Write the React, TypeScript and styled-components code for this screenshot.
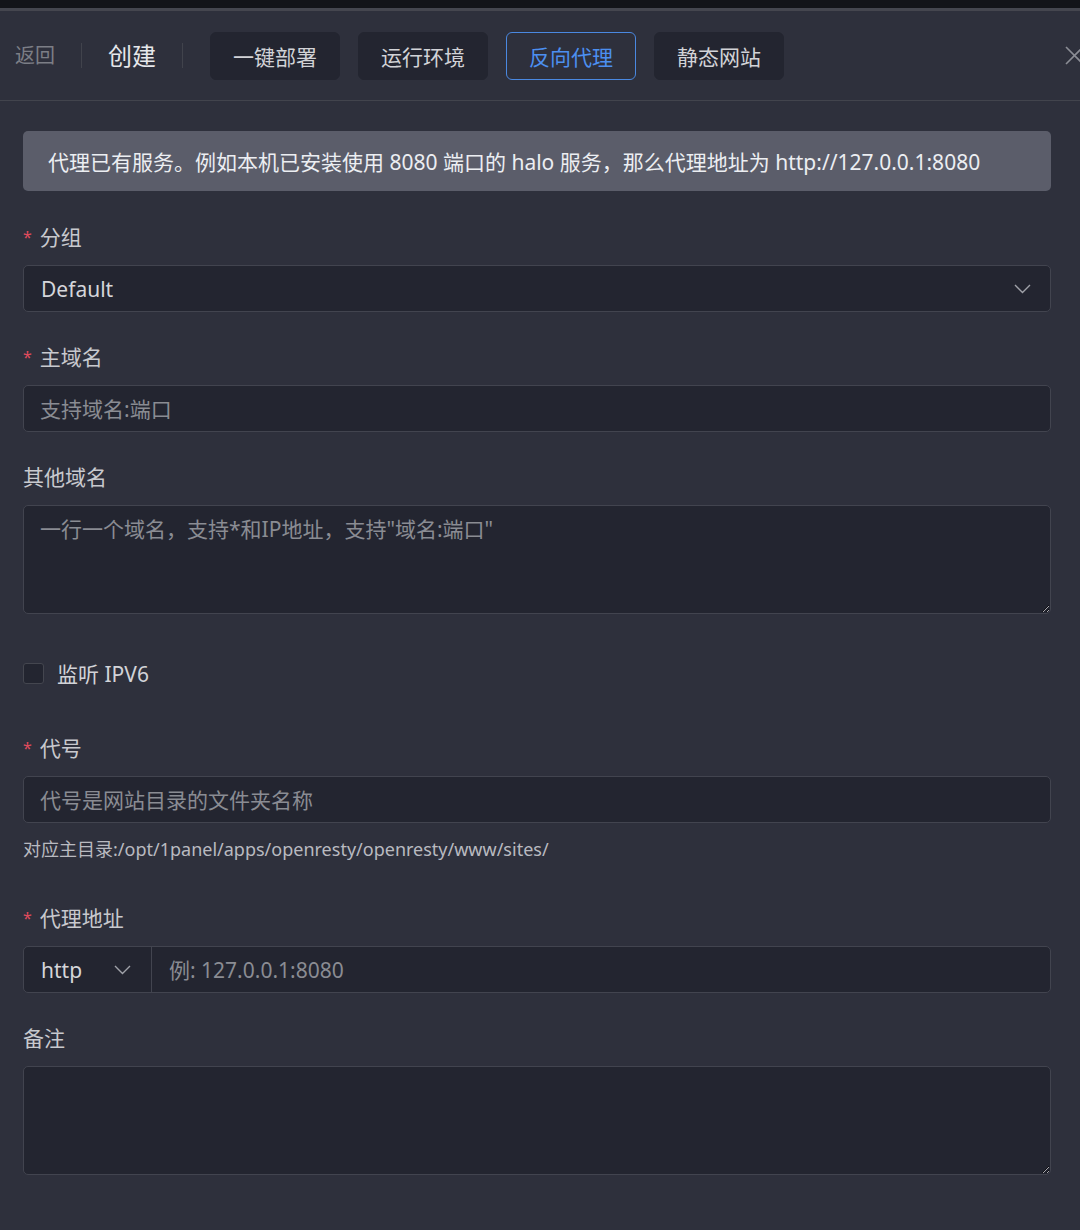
import React from "react";
import styled, { createGlobalStyle } from "styled-components";

const GlobalStyle = createGlobalStyle`
  html, body {
    margin: 0;
    padding: 0;
    background: #2e303c;
  }
  body {
    font-family: "Noto Sans", "Noto Sans CJK SC", sans-serif;
    color: #cfd0d5;
    overflow: hidden;
  }
  * { box-sizing: border-box; }
`;

const Page = styled.div`
  width: 1080px;
  min-height: 1230px;
  background: #2e303c;
  overflow: hidden;
`;

const TopStrip = styled.div`
  height: 11px;
  background: #131419;
  border-bottom: 3px solid #45464f;
`;

const Header = styled.header`
  height: 90px;
  display: flex;
  align-items: center;
  padding-left: 15px;
  border-bottom: 1px solid #42444d;
`;

const BackLink = styled.span`
  font-size: 20px;
  color: #7c7e86;
  line-height: 1;
`;

const VDivider = styled.span`
  width: 1px;
  height: 25px;
  background: #41434c;
  margin: 0 26px;
`;

const Title = styled.span`
  font-size: 24px;
  color: #e6e7eb;
  line-height: 1;
`;

const TabGroup = styled.div`
  display: flex;
  gap: 18px;
  margin-left: 1px;
`;

const TabButton = styled.button<{ $active?: boolean }>`
  height: 48px;
  padding: 0 22px;
  border-radius: 6px;
  font-family: inherit;
  font-size: 21px;
  cursor: pointer;
  background: ${(p) => (p.$active ? "#2e303c" : "#232530")};
  color: ${(p) => (p.$active ? "#4c8ff0" : "#d2d3d7")};
  border: 1px solid ${(p) => (p.$active ? "#4a88e0" : "#232530")};
`;

const CloseButton = styled.span`
  margin-left: auto;
  margin-right: -4px;
  display: flex;
  align-items: center;
  color: #8b8d95;
`;

const Content = styled.main`
  padding: 30px 29px 0 23px;
`;

const Alert = styled.div`
  height: 60px;
  display: flex;
  align-items: center;
  padding: 0 25px;
  background: #5b5d6a;
  border-radius: 5px;
  font-size: 21px;
  color: #eceef2;
  margin-bottom: 30px;
`;

const FormItem = styled.div<{ $gap?: number }>`
  margin-bottom: ${(p) => p.$gap ?? 29}px;
`;

const Label = styled.div`
  height: 32px;
  line-height: 32px;
  font-size: 21px;
  color: #c8c9ce;
  margin-bottom: 12px;
`;

const Star = styled.span`
  color: #e04b5c;
  font-size: 16px;
  margin-right: 8px;
  vertical-align: 2px;
`;

const fieldBase = `
  width: 100%;
  background: #232530;
  border: 1px solid #42444f;
  border-radius: 5px;
  font-family: inherit;
  font-size: 21px;
  color: #d5d6da;
  outline: none;
`;

const TextInput = styled.input`
  ${fieldBase}
  height: 47px;
  padding: 0 16px;
  &::placeholder { color: #8a8c93; }
`;

const TextArea = styled.textarea`
  ${fieldBase}
  display: block;
  height: 109px;
  padding: 8px 16px;
  line-height: 30px;
  resize: vertical;
  &::placeholder { color: #8a8c93; }
`;

const SelectBox = styled.div`
  ${fieldBase}
  height: 47px;
  display: flex;
  align-items: center;
  justify-content: space-between;
  padding: 0 19px 0 17px;
`;

const Chevron = () => (
  <svg width="17" height="10" viewBox="0 0 17 10" fill="none">
    <path d="M1 1l7.5 7.5L16 1" stroke="#a0a2a9" strokeWidth="1.4" />
  </svg>
);

const CheckRow = styled.label`
  height: 60px;
  display: flex;
  align-items: center;
  gap: 13px;
  font-size: 21px;
  color: #d2d3d8;
  margin-bottom: 29px;
`;

const CheckBox = styled.span`
  width: 21px;
  height: 21px;
  border: 1px solid #44464f;
  background: #232530;
  border-radius: 3px;
`;

const Help = styled.div`
  margin-top: 13px;
  height: 26px;
  line-height: 26px;
  font-size: 18px;
  color: #b9bac0;
`;

const InputGroup = styled.div`
  ${fieldBase}
  height: 47px;
  display: flex;
  align-items: stretch;
  overflow: hidden;
`;

const Prefix = styled.div`
  width: 128px;
  display: flex;
  align-items: center;
  justify-content: space-between;
  padding: 0 20px 0 17px;
  border-right: 1px solid #42444f;
  color: #d5d6da;
`;

const GroupInput = styled.input`
  flex: 1;
  background: transparent;
  border: none;
  outline: none;
  font-family: inherit;
  font-size: 21px;
  color: #d5d6da;
  padding: 0 17px;
  &::placeholder { color: #8a8c93; }
`;

const tabs = ["一键部署", "运行环境", "反向代理", "静态网站"];

export default function App() {
  return (
    <Page>
      <GlobalStyle />
      <TopStrip />
      <Header>
        <BackLink>返回</BackLink>
        <VDivider />
        <Title>创建</Title>
        <VDivider />
        <TabGroup>
          {tabs.map((t) => (
            <TabButton key={t} $active={t === "反向代理"}>
              {t}
            </TabButton>
          ))}
        </TabGroup>
        <CloseButton>
          <svg width="19" height="19" viewBox="0 0 19 19" fill="none">
            <path d="M1 1l17 17M18 1L1 18" stroke="currentColor" strokeWidth="1.6" />
          </svg>
        </CloseButton>
      </Header>
      <Content>
        <Alert>代理已有服务。例如本机已安装使用 8080 端口的 halo 服务，那么代理地址为 http://127.0.0.1:8080</Alert>

        <FormItem>
          <Label><Star>*</Star>分组</Label>
          <SelectBox>
            <span>Default</span>
            <Chevron />
          </SelectBox>
        </FormItem>

        <FormItem>
          <Label><Star>*</Star>主域名</Label>
          <TextInput placeholder="支持域名:端口" />
        </FormItem>

        <FormItem>
          <Label>其他域名</Label>
          <TextArea placeholder={'一行一个域名，支持*和IP地址，支持"域名:端口"'} />
        </FormItem>

        <CheckRow>
          <CheckBox />
          监听 IPV6
        </CheckRow>

        <FormItem $gap={40}>
          <Label><Star>*</Star>代号</Label>
          <TextInput placeholder="代号是网站目录的文件夹名称" />
          <Help>对应主目录:/opt/1panel/apps/openresty/openresty/www/sites/</Help>
        </FormItem>

        <FormItem>
          <Label><Star>*</Star>代理地址</Label>
          <InputGroup>
            <Prefix>
              <span>http</span>
              <Chevron />
            </Prefix>
            <GroupInput placeholder="例: 127.0.0.1:8080" />
          </InputGroup>
        </FormItem>

        <FormItem>
          <Label>备注</Label>
          <TextArea />
        </FormItem>
      </Content>
    </Page>
  );
}
